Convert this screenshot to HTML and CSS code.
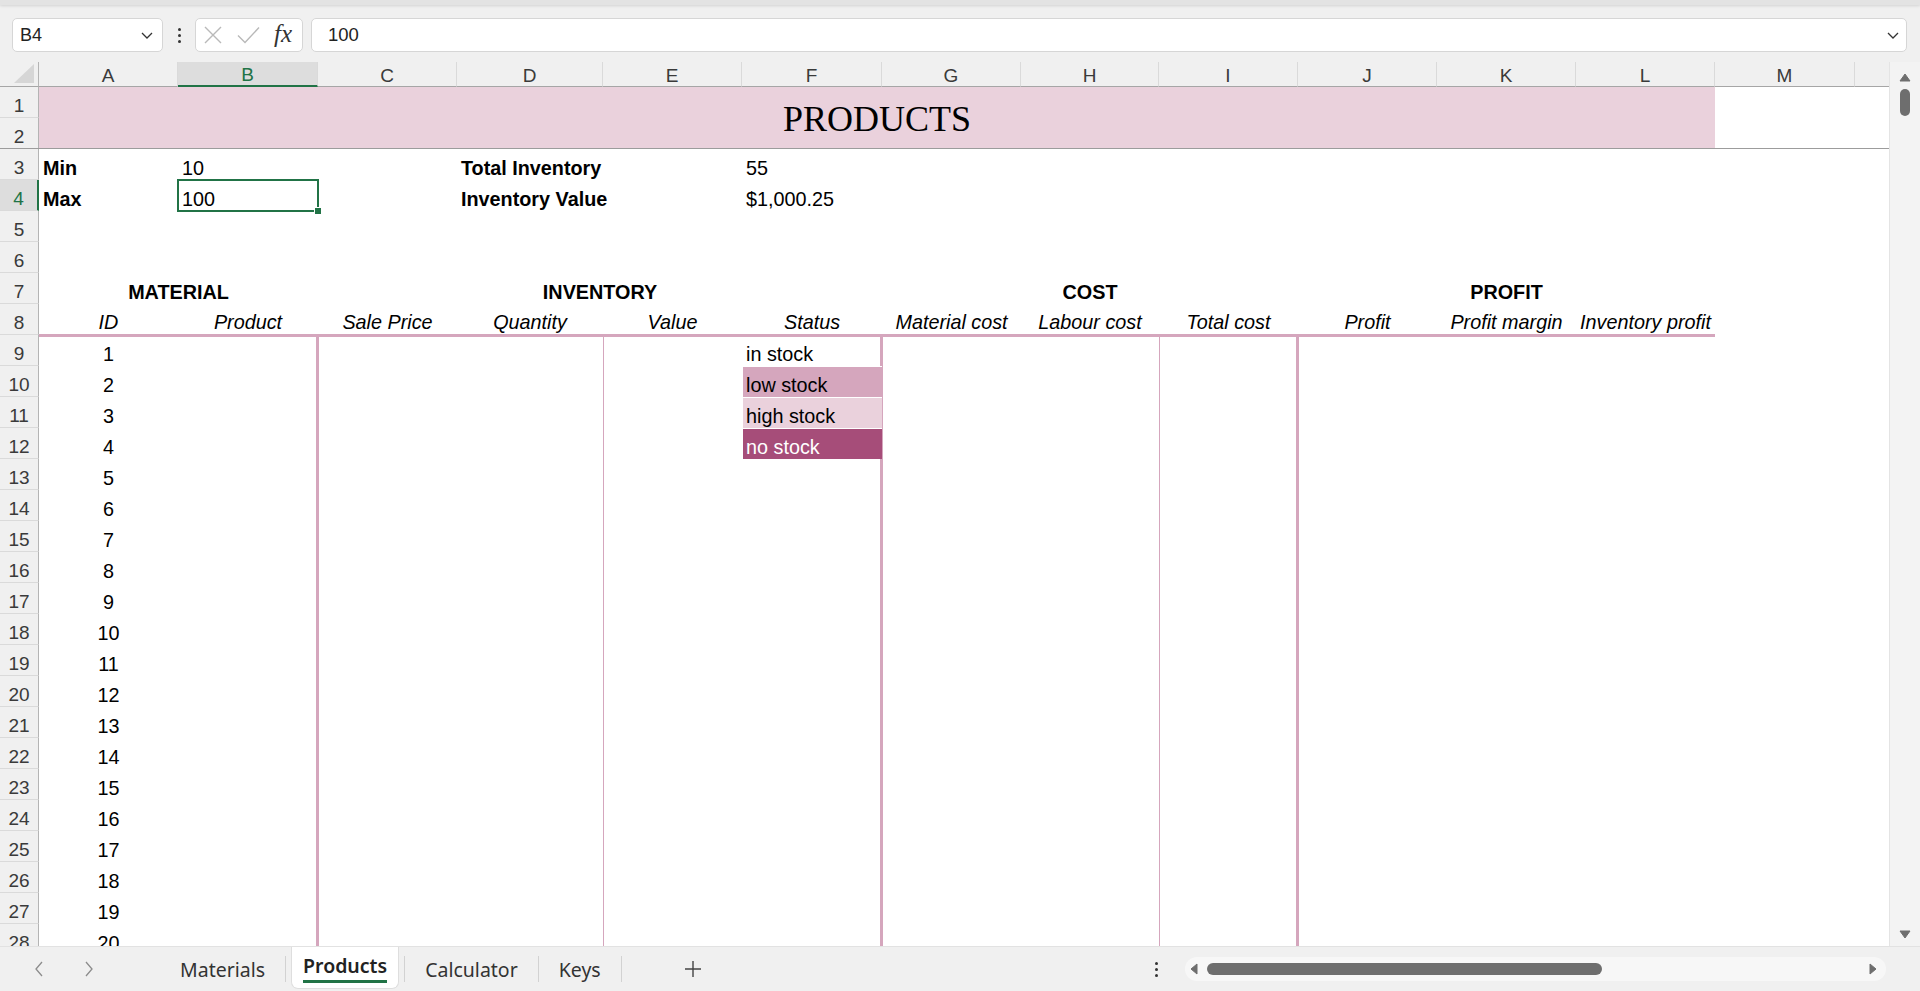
FILE: index.html
```html
<!DOCTYPE html>
<html>
<head>
<meta charset="utf-8">
<title>Products</title>
<link rel="stylesheet" href="styles.css">
</head>
<body>
<div class="app">
  <div class="topstrip"></div>
  <div class="fbar">
    <div class="namebox"><span>B4</span><svg width="14" height="14" viewBox="0 0 14 14"><path d="M2 5l5 5 5-5" fill="none" stroke="#333" stroke-width="1.3"/></svg></div>
    <div class="vdots"><i></i><i></i><i></i></div>
    <div class="fbtns">
      <svg class="ic-x" width="18" height="18" viewBox="0 0 18 18"><path d="M1 1l16 16M17 1L1 17" stroke="#b9b9b9" stroke-width="1.4" fill="none"/></svg>
      <svg class="ic-ok" width="23" height="18" viewBox="0 0 23 18"><path d="M1 9.5l7 7L22 1.5" stroke="#b9b9b9" stroke-width="1.4" fill="none"/></svg>
      <span class="fx">fx</span>
    </div>
    <div class="finput"><span>100</span><svg width="14" height="14" viewBox="0 0 14 14"><path d="M2 5l5 5 5-5" fill="none" stroke="#333" stroke-width="1.3"/></svg></div>
  </div>

  <div class="main">
    <div class="sheet">
      <div class="colhdr">
        <div class="corner"><svg width="20" height="19" viewBox="0 0 20 19"><path d="M20 0V19H0Z" fill="#d6d6d6"/></svg></div>
        <div class="ch">A</div>
        <div class="ch on">B</div>
        <div class="ch">C</div>
        <div class="ch">D</div>
        <div class="ch">E</div>
        <div class="ch">F</div>
        <div class="ch">G</div>
        <div class="ch">H</div>
        <div class="ch">I</div>
        <div class="ch">J</div>
        <div class="ch">K</div>
        <div class="ch">L</div>
        <div class="ch">M</div>
        <div class="ch last"></div>
      </div>

      <div class="titlerows">
        <div class="rh r1">1</div>
        <div class="rh r2">2</div>
        <div class="title">PRODUCTS</div>
      </div>

      <div class="row">
        <div class="rh">3</div>
        <div class="c cA b">Min</div>
        <div class="c cB">10</div>
        <div class="c cD b">Total Inventory</div>
        <div class="c cF">55</div>
      </div>
      <div class="row">
        <div class="rh on">4</div>
        <div class="c cA b">Max</div>
        <div class="c cB cur">100<span class="selbox"></span></div>
        <div class="c cD b">Inventory Value</div>
        <div class="c cF">$1,000.25</div>
      </div>
      <div class="row"><div class="rh">5</div></div>
      <div class="row"><div class="rh">6</div></div>
      <div class="row">
        <div class="rh">7</div>
        <div class="c sAB b ctr">MATERIAL</div>
        <div class="c sCF b ctr">INVENTORY</div>
        <div class="c sGI b ctr">COST</div>
        <div class="c sJL b ctr">PROFIT</div>
      </div>
      <div class="row">
        <div class="rh">8</div>
        <div class="c cA it ctr u">ID</div>
        <div class="c cB it ctr u">Product</div>
        <div class="c cC it ctr u">Sale Price</div>
        <div class="c cD it ctr u">Quantity</div>
        <div class="c cE it ctr u">Value</div>
        <div class="c cF it ctr u">Status</div>
        <div class="c cG it ctr u">Material cost</div>
        <div class="c cH it ctr u">Labour cost</div>
        <div class="c cI it ctr u">Total cost</div>
        <div class="c cJ it ctr u">Profit</div>
        <div class="c cK it ctr u">Profit margin</div>
        <div class="c cL it ctr u">Inventory profit</div>
      </div>

      <div class="body">
        <div class="vl thick cC"></div>
        <div class="vl thin cE"></div>
        <div class="vl thick cG"></div>
        <div class="vl thin cI"></div>
        <div class="vl thick cJ"></div>
        <div class="st s1">in stock</div>
        <div class="st s2 low">low stock</div>
        <div class="st s3 high">high stock</div>
        <div class="st s4 none">no stock</div>

        <div class="rh">9</div><div class="c cA ctr">1</div>
        <div class="rh">10</div><div class="c cA ctr">2</div>
        <div class="rh">11</div><div class="c cA ctr">3</div>
        <div class="rh">12</div><div class="c cA ctr">4</div>
        <div class="rh">13</div><div class="c cA ctr">5</div>
        <div class="rh">14</div><div class="c cA ctr">6</div>
        <div class="rh">15</div><div class="c cA ctr">7</div>
        <div class="rh">16</div><div class="c cA ctr">8</div>
        <div class="rh">17</div><div class="c cA ctr">9</div>
        <div class="rh">18</div><div class="c cA ctr">10</div>
        <div class="rh">19</div><div class="c cA ctr">11</div>
        <div class="rh">20</div><div class="c cA ctr">12</div>
        <div class="rh">21</div><div class="c cA ctr">13</div>
        <div class="rh">22</div><div class="c cA ctr">14</div>
        <div class="rh">23</div><div class="c cA ctr">15</div>
        <div class="rh">24</div><div class="c cA ctr">16</div>
        <div class="rh">25</div><div class="c cA ctr">17</div>
        <div class="rh">26</div><div class="c cA ctr">18</div>
        <div class="rh">27</div><div class="c cA ctr">19</div>
        <div class="rh">28</div><div class="c cA ctr">20</div>
      </div>
    </div>

    <div class="vscroll">
      <svg width="12" height="9" viewBox="0 0 12 9"><path d="M6 1l5 7H1z" fill="#6e6e6e" stroke="#6e6e6e" stroke-linejoin="round"/></svg>
      <div class="vthumb"></div>
      <div class="vspace"></div>
      <svg width="12" height="9" viewBox="0 0 12 9"><path d="M6 8l5-7H1z" fill="#6e6e6e" stroke="#6e6e6e" stroke-linejoin="round"/></svg>
    </div>
  </div>

  <div class="tabbar">
    <div class="tabnav">
      <svg width="10" height="16" viewBox="0 0 10 16"><path d="M8 1L2 8l6 7" fill="none" stroke="#8c8c8c" stroke-width="1.3"/></svg>
      <svg width="10" height="16" viewBox="0 0 10 16"><path d="M2 1l6 7-6 7" fill="none" stroke="#8c8c8c" stroke-width="1.3"/></svg>
    </div>
    <div class="tab">Materials</div>
    <div class="tsep"></div>
    <div class="tab active"><span>Products</span></div>
    <div class="tsep"></div>
    <div class="tab">Calculator</div>
    <div class="tsep"></div>
    <div class="tab">Keys</div>
    <div class="tsep"></div>
    <div class="addtab"><svg width="18" height="18" viewBox="0 0 18 18"><path d="M9 1v16M1 9h16" stroke="#444" stroke-width="1.4"/></svg></div>
    <div class="tbright">
      <div class="vdots sm"><i></i><i></i><i></i></div>
      <div class="hscroll">
        <svg width="8" height="12" viewBox="0 0 8 12"><path d="M7 1v10L1 6z" fill="#6e6e6e" stroke="#6e6e6e" stroke-linejoin="round"/></svg>
        <div class="hthumb"></div>
        <svg class="hr" width="8" height="12" viewBox="0 0 8 12"><path d="M1 1v10l6-5z" fill="#6e6e6e" stroke="#6e6e6e" stroke-linejoin="round"/></svg>
      </div>
    </div>
  </div>
</div>
</body>
</html>
```

FILE: styles.css
```css
* { box-sizing: border-box; }
html, body { margin: 0; padding: 0; }
body {
  width: 1920px;
  height: 991px;
  overflow: hidden;
  background: #f0f0f0;
  font-family: "Liberation Sans", Arial, sans-serif;
  color: #000;
}
.app { display: flex; flex-direction: column; height: 991px; }

.topstrip {
  height: 5px;
  background: #e3e3e3;
  box-shadow: 0 1px 3px rgba(0,0,0,.12);
  position: relative;
  z-index: 1;
}

/* formula bar */
.fbar {
  height: 57px;
  display: flex;
  align-items: flex-start;
  padding: 13px 13px 0 12px;
}
.namebox {
  width: 151px;
  height: 34px;
  background: #fff;
  border: 1px solid #d6d6d6;
  border-radius: 5px;
  display: flex;
  align-items: center;
  justify-content: space-between;
  padding: 0 8px 0 7px;
  font-size: 18px;
  color: #222;
}
.vdots {
  width: 32px;
  height: 34px;
  display: flex;
  flex-direction: column;
  align-items: center;
  justify-content: center;
  gap: 3px;
}
.vdots i { display: block; width: 3px; height: 3px; background: #333; border-radius: 50%; }
.fbtns {
  width: 108px;
  height: 34px;
  background: #fff;
  border: 1px solid #d6d6d6;
  border-radius: 5px;
  display: flex;
  align-items: center;
  padding-left: 8px;
}
.ic-ok { margin-left: 15px; }
.fx {
  margin-left: 14px;
  font-family: "Liberation Serif", "Times New Roman", serif;
  font-style: italic;
  font-size: 25px;
  color: #333;
  line-height: 1;
  padding-bottom: 3px;
}
.finput {
  flex: 1;
  margin-left: 8px;
  height: 34px;
  background: #fff;
  border: 1px solid #d6d6d6;
  border-radius: 5px;
  display: flex;
  align-items: center;
  justify-content: space-between;
  padding: 0 6px 0 16px;
  font-size: 18.5px;
  color: #222;
}

/* main area */
.main { display: flex; height: 884px; }
.sheet {
  --cols: 39px 139px 140px 139px 146px 139px 140px 139px 138px 139px 139px 139px 139px 140px 1fr;
  flex: 1;
  background: #fff;
  overflow: hidden;
}

.colhdr {
  display: grid;
  grid-template-columns: var(--cols);
  height: 25px;
  background: #f0f0f0;
}
.corner {
  border-right: 1px solid #b4b4b4;
  border-bottom: 1px solid #a6a6a6;
  display: flex;
  align-items: flex-end;
  justify-content: flex-end;
  padding: 0 4px 3px 0;
}
.ch {
  border-right: 1px solid #dadada;
  border-bottom: 1px solid #a6a6a6;
  display: flex;
  align-items: flex-end;
  justify-content: center;
  font-size: 19px;
  line-height: 21px;
  color: #3a3a3a;
}
.ch.on {
  background: #dddddd;
  color: #217346;
  border-bottom: 2px solid #217346;
  line-height: 20px;
}
.ch.last { border-right: 0; }

.rh {
  grid-column: 1;
  background: #f0f0f0;
  border-right: 1px solid #b4b4b4;
  border-bottom: 1px solid #dadada;
  display: flex;
  align-items: flex-end;
  justify-content: center;
  font-size: 19px;
  line-height: 22px;
  color: #3a3a3a;
}
.rh.on {
  background: #dddddd;
  color: #217346;
  border-right: 2px solid #217346;
}

.titlerows {
  display: grid;
  grid-template-columns: var(--cols);
  grid-template-rows: 31px 30px;
  border-bottom: 1px solid #9c9c9c;
}
.rh.r1 { grid-row: 1; }
.rh.r2 { grid-row: 2; border-bottom: 0; }
.title {
  grid-column: 2 / 14;
  grid-row: 1 / 3;
  background: #ead1dc;
  display: flex;
  align-items: center;
  justify-content: center;
  padding-top: 2px;
  font-family: "Liberation Serif", "Times New Roman", serif;
  font-size: 36px;
}

.row {
  display: grid;
  grid-template-columns: var(--cols);
  grid-template-rows: 31px;
  height: 31px;
}

.c {
  display: flex;
  align-items: flex-end;
  padding: 0 4px;
  font-size: 19.8px;
  line-height: 23px;
  white-space: nowrap;
}
.b { font-weight: bold; }
.it { font-style: italic; }
.ctr { justify-content: center; }
.u { border-bottom: 3px solid #d5a6bd; margin-bottom: -2px; }

.cA { grid-column: 2; }
.cB { grid-column: 3; }
.cC { grid-column: 4; }
.cD { grid-column: 5; }
.cE { grid-column: 6; }
.cF { grid-column: 7; }
.cG { grid-column: 8; }
.cH { grid-column: 9; }
.cI { grid-column: 10; }
.cJ { grid-column: 11; }
.cK { grid-column: 12; }
.cL { grid-column: 13; }
.sAB { grid-column: 2 / 4; }
.sCF { grid-column: 4 / 8; }
.sGI { grid-column: 8 / 11; }
.sJL { grid-column: 11 / 14; }

.cur { position: relative; }
.selbox {
  position: absolute;
  top: -1px; left: -1px; right: -1px; bottom: -1px;
  border: 2px solid #217346;
}
.selbox::after {
  content: "";
  position: absolute;
  right: -4px;
  bottom: -4px;
  width: 6px;
  height: 6px;
  background: #217346;
  box-shadow: 0 0 0 1px #fff;
}

.body {
  display: grid;
  grid-template-columns: var(--cols);
  grid-template-rows: repeat(20, 31px);
}
.vl { grid-row: 1 / -1; }
.thick { border-left: 3px solid #d5a6bd; margin-left: -2px; }
.thin { border-left: 1px solid #d5a6bd; }

.st {
  grid-column: 7;
  display: flex;
  align-items: flex-end;
  padding: 0 3px;
  font-size: 19.8px;
  line-height: 23px;
  white-space: nowrap;
  border-top: 1px solid #fff;
  border-left: 1px solid #fff;
}
.st.s1 { border: 0; padding-left: 4px; }
.s1 { grid-row: 1; }
.s2 { grid-row: 2; }
.s3 { grid-row: 3; }
.s4 { grid-row: 4; }
.low { background: #d5a6bd; }
.high { background: #ead1dc; }
.none { background: #a64d79; color: #fff; }

/* vertical scrollbar */
.vscroll {
  width: 31px;
  background: #f3f3f3;
  border-left: 1px solid #e4e4e4;
  display: flex;
  flex-direction: column;
  align-items: center;
  padding: 11px 0 7px;
}
.vthumb {
  margin-top: 7px;
  width: 10px;
  height: 27px;
  border-radius: 5px;
  background: #6e6e6e;
}
.vspace { flex: 1; }

/* tab bar */
.tabbar {
  height: 45px;
  display: flex;
  align-items: center;
  border-top: 1px solid #e2e2e2;
  font-family: "Noto Sans", "Open Sans", sans-serif;
  font-size: 19.5px;
  color: #333;
}
.tabnav {
  width: 160px;
  display: flex;
  align-items: center;
  padding-left: 34px;
  gap: 40px;
}
.tab {
  padding: 0 20px;
  height: 44px;
  display: flex;
  align-items: center;
}
.tab.active {
  align-self: flex-start;
  margin: 0 5px;
  padding: 0 11px;
  height: 42px;
  background: #fff;
  border: 1px solid #dedede;
  border-top: 0;
  border-radius: 0 0 7px 7px;
  flex-direction: column;
  justify-content: center;
  font-weight: 600;
  color: #222;
}
.tab.active span {
  border-bottom: 3px solid #217346;
  line-height: 24px;
  padding-bottom: 2px;
  margin-top: 2px;
}
.tsep { width: 1px; height: 26px; background: #d2d2d2; }
.addtab { margin-left: 62px; display: flex; align-items: center; }
.tbright {
  margin-left: auto;
  margin-right: 34px;
  display: flex;
  align-items: center;
}
.vdots.sm { width: 20px; height: 24px; margin-right: 19px; }
.hscroll {
  width: 701px;
  height: 24px;
  border-radius: 12px;
  background: #f7f7f7;
  display: flex;
  align-items: center;
  padding: 0 9px 0 5px;
}
.hthumb {
  margin-left: 9px;
  width: 395px;
  height: 12px;
  border-radius: 6px;
  background: #6e6e6e;
}
.hr { margin-left: auto; }
```
